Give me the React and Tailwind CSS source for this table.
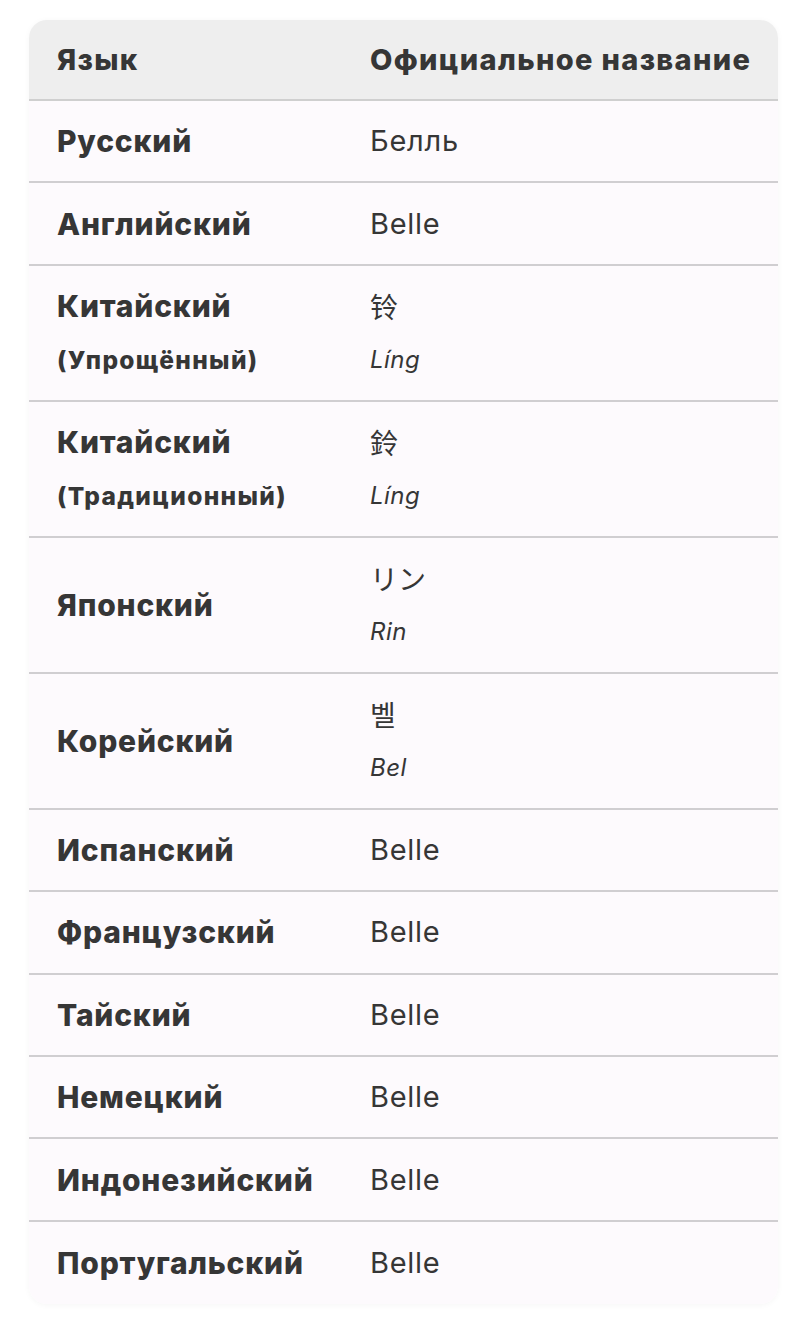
const ROWS = [
  { lang: "Русский", name: "Белль" },
  { lang: "Английский", name: "Belle" },
  { lang: "Китайский", sub: "(Упрощённый)", name: "铃", roman: "Líng", cjk: "'Noto Sans CJK SC'" },
  { lang: "Китайский", sub: "(Традиционный)", name: "鈴", roman: "Líng", cjk: "'Noto Sans CJK TC'" },
  { lang: "Японский", name: "リン", roman: "Rin", cjk: "'Noto Sans CJK JP'" },
  { lang: "Корейский", name: "벨", roman: "Bel", cjk: "'Noto Sans CJK KR'" },
  { lang: "Испанский", name: "Belle" },
  { lang: "Французский", name: "Belle" },
  { lang: "Тайский", name: "Belle" },
  { lang: "Немецкий", name: "Belle" },
  { lang: "Индонезийский", name: "Belle" },
  { lang: "Португальский", name: "Belle" },
]

const Row = ({ row, last }) => {
  const tall = !!row.roman
  return (
    <div
      className={`grid grid-cols-[341px_1fr] items-center bg-[#fdfafd] ${tall ? "h-[136px]" : "h-[82.4px]"} ${last ? "" : "border-b-2 border-[#d0ced1]"}`}
    >
      <div className="pl-7 font-extrabold tracking-[0.05em] text-[#363636]">
        <div className="text-[30px] leading-[54px]">{row.lang}</div>
        {row.sub && <div className="text-[24.5px] tracking-[0.055em] leading-[54px]">{row.sub}</div>}
      </div>
      <div className="text-[#363636]">
        {tall ? (
          <>
            <div
              className="text-[28px] leading-[54px]"
              style={{ fontFamily: `${row.cjk}, 'Noto Sans CJK SC', sans-serif` }}
            >
              {row.name}
            </div>
            <div className="text-[24px] italic tracking-[0.02em] leading-[54px]">{row.roman}</div>
          </>
        ) : (
          <div className="text-[29px] tracking-[0.025em] leading-[42px]">{row.name}</div>
        )}
      </div>
    </div>
  )
}

export default function App() {
  return (
    <div className="min-h-screen bg-white pt-5 px-[29px] font-['Inter',sans-serif]">
      <div className="w-[749px] overflow-hidden rounded-[18px] shadow-[0_1px_6px_rgba(0,0,0,0.04)]">
        {/* Header */}
        <div className="grid grid-cols-[341px_1fr] items-center h-[81px] bg-[#eeeeee] border-b-2 border-[#cfcfcf] font-extrabold tracking-[0.046em] text-[#363636] text-[29px]">
          <div className="pl-7">Язык</div>
          <div>Официальное название</div>
        </div>
        {ROWS.map((row, i) => (
          <Row key={i} row={row} last={i === ROWS.length - 1} />
        ))}
      </div>
    </div>
  )
}
